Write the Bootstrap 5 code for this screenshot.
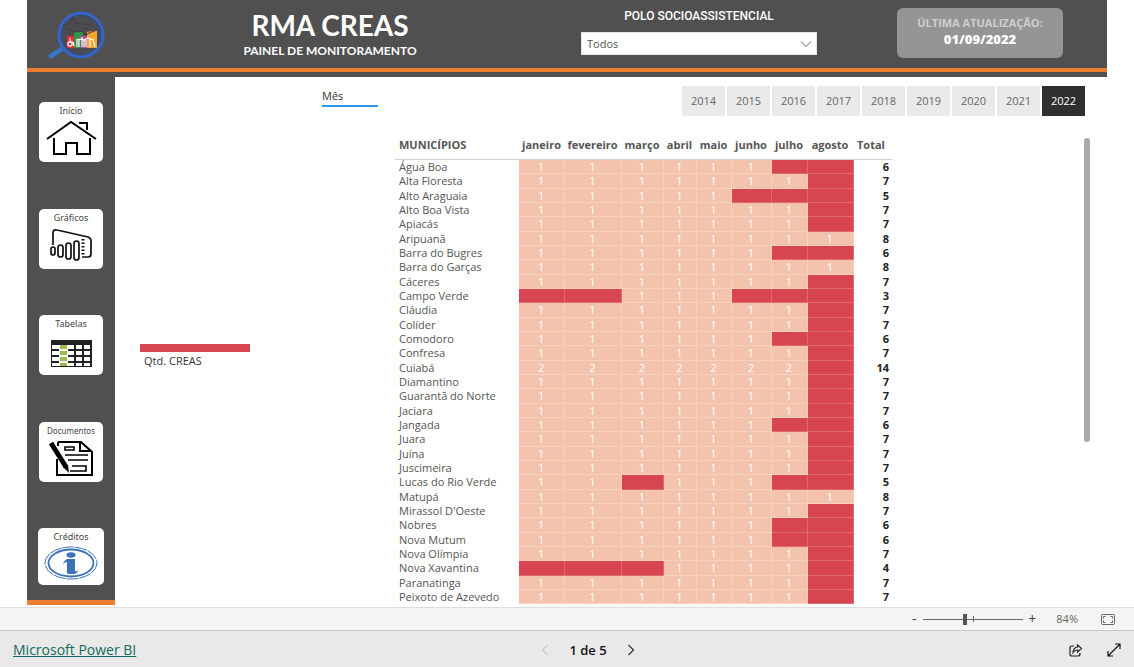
<!DOCTYPE html>
<html lang="pt-BR">
<head>
<meta charset="utf-8">
<meta name="viewport" content="width=device-width, initial-scale=1">
<title>RMA CREAS - Painel de Monitoramento</title>
<link href="https://cdn.jsdelivr.net/npm/bootstrap@5.3.0/dist/css/bootstrap.min.css" rel="stylesheet">
<script src="https://cdn.jsdelivr.net/npm/bootstrap@5.3.0/dist/js/bootstrap.bundle.min.js" defer></script>
<style>
  :root { --slate:#505050; --orange:#ed7d31; --peach:#f4c3ae; --red:#d64550; }
  body { font-family:"Open Sans","Noto Sans",sans-serif; font-size:11px; line-height:14px; color:#555; background:#fff; }
  .report { margin:0 27px 2px; }
  .top-band { background:var(--slate); display:grid; grid-template-columns:88px 430fr 308fr 254fr; height:68px; }
  .stripe { height:9px; background:var(--slate); border-top:4px solid var(--orange); }
  .brand-title { font:700 28px/36px Lato,sans-serif; padding-top:7px; }
  .brand-sub { font:700 12px/16px Lato,sans-serif; }
  .filter-label { font:500 12px/16px Roboto,sans-serif; }
  .filter-select { width:236px; height:23px; padding:0 5px; font-size:11px; line-height:14px; color:#555; border:1px solid #e6e6e6; border-radius:0;
    background-position:right 4px center; background-size:12px 12px;
    background-image:url("data:image/svg+xml,%3Csvg xmlns='http://www.w3.org/2000/svg' viewBox='0 0 12 12'%3E%3Cpath d='M1 3.5l5 5 5-5' fill='none' stroke='%23666'/%3E%3C/svg%3E"); }
  .update-box { width:166px; height:50px; background:#959595; border-radius:6px; color:#cfcfcf; font-weight:700; }
  .update-box strong { font-size:13px; line-height:18px; color:#fff; }
  .side { width:88px; flex:none; background:var(--slate); border-bottom:5px solid var(--orange); padding:25px 12px 15px; }
  .side a { width:64px; height:60px; background:#fff; border-radius:5px; color:#444; text-decoration:none; font:9px/14px "Noto Sans",sans-serif; padding-top:2px; }
  .side .label-condensed { font-size:8px; }
  .side .card-last { width:66px; height:57px; }
  .side svg { width:54px; height:40px; }
  .tab-month { width:56px; color:#333; border-bottom:2px solid #2f96e6; margin-left:207px; }
  .main-top { padding:9px 22px 0 0; }
  .year-group { gap:2px; }
  .year { width:43px; height:30px; padding:0; border:0; border-radius:0; background:#eaeaea; color:#666; font-size:11px; }
  .year:hover { background:#ddd; }
  .year.active, .year.active:hover { background:#2f2f2f; color:#fff; }
  .legend { width:110px; margin:228px 145px 0 25px; color:#333; }
  .legend-bar { height:8px; background:var(--red); margin-bottom:2px; }
  .matrix { table-layout:fixed; width:497px; margin-top:15px; }
  .matrix th { font-weight:700; height:28px; padding:0; text-align:center; border-bottom:1px solid #d0d0d0; }
  .matrix tbody tr { height:14px; }
  .matrix tbody tr:nth-child(3n+2) { height:15px; }
  .matrix td { padding:0; line-height:13px; text-align:center; white-space:nowrap; }
  .matrix .town { text-align:left; padding-left:4px; font-weight:400; }
  .matrix th.town { font-weight:700; }
  .matrix .val { background:var(--peach); color:#fff; border-right:1px solid #f7d0bf; border-bottom:1px solid #f7d0bf; }
  .matrix .none { background:var(--red); border-color:#df6a73; }
  .matrix .sum { text-align:right; padding-right:3px; color:#222; font-weight:700; }
  .matrix .sum-head { text-align:left; padding-left:4px; }
  .scroll-thumb { width:6px; height:304px; border-radius:3px; background:#aaa; margin:22px 17px 0 auto; }
  .zoom-bar { height:23px; background:#f4f4f4; border-top:1px solid #ddd; padding-right:19px; color:#666; }
  .zoom-bar button, .pager button { padding:0; border:0; background:none; color:inherit; }
  .zoom-step { width:10px; font-size:14px; line-height:16px; color:#444 !important; }
  .zoom-range { appearance:none; width:100px; height:12px; margin:0 4px; background:linear-gradient(#666,#666) 50px 3px/1px 6px no-repeat, linear-gradient(#666,#666) 0 6px/100px 1px no-repeat; }
  .zoom-range::-webkit-slider-thumb { appearance:none; width:4px; height:11px; background:#555; }
  .zoom-value { margin:0 23px 0 19px; }
  .pager { min-height:37px; background:#e9e9e9; border-top:1px solid #c8c8c8; display:grid; grid-template-columns:1fr auto 1fr; padding:2px 13px 0; }
  .pager a { font-size:14px; line-height:18px; color:#0f6b61; }
  .page-nav { margin-left:42px; }
  .pager .page-no { font-size:13px; line-height:18px; font-weight:600; color:#111; }
</style>
</head>
<body class="d-flex flex-column min-vh-100">
<div class="report flex-grow-1 d-flex flex-column">
  <header>
    <div class="top-band text-white">
      <svg class="ms-3 mt-2" width="66" height="54" viewBox="0 0 66 54" role="img" aria-label="Logo RMA">
        <path d="M8 48L22 39" stroke="#3a72c8" stroke-width="5" stroke-linecap="round"/>
        <circle cx="38" cy="27" r="22" fill="#4c4c50" stroke="#3467c5" stroke-width="3"/>
        <circle cx="38" cy="27" r="19.500" fill="none" stroke="#294c9b"/>
        <path d="M20 17l7-1 3-7 2 6 9 1 10 2M23 19l6 4M40 20l8 2" stroke="#3b3b3d" stroke-width=".7" fill="none"/>
        <path d="M24 28h8v12h-8z" fill="#e42e36"/><path d="M31 25l2-2 7 1v16h-9z" fill="#329345"/>
        <path d="M38 28h8v12h-8z" fill="#b14ca1"/><path d="M44 24l10-2v18H44z" fill="#f6a42b"/>
        <path d="M31 24l8-1 4 4 3-2 8-3" fill="none" stroke="#3b3b3d"/>
        <g stroke="#fff" stroke-width="1.200" fill="none"><circle cx="27" cy="36" r="2.200"/><path d="M27 30v4h3l1 4M34 32v7M36 31v8M39 29v10M41 31v8M43 32v7M47 30v9M50 31l2 8M33 32l4-1 4 1 4-2 5 2"/></g>
      </svg>
      <div class="text-center">
        <h1 class="brand-title m-0">RMA CREAS</h1>
        <p class="brand-sub m-0">PAINEL DE MONITORAMENTO</p>
      </div>
      <div class="d-flex flex-column align-items-center pt-2">
        <label class="filter-label mb-2" for="polo">POLO SOCIOASSISTENCIAL</label>
        <select class="form-select filter-select" id="polo"><option>Todos</option></select>
      </div>
      <div class="pt-2">
        <div class="update-box mx-auto text-center pt-2">ÚLTIMA ATUALIZAÇÃO:<br><strong>01/09/2022</strong></div>
      </div>
    </div>
    <div class="stripe"></div>
  </header>
  <div class="d-flex flex-grow-1">
    <nav class="side d-flex flex-column align-items-center justify-content-between" aria-label="Páginas">
      <a class="d-flex flex-column align-items-center" href="#inicio">Início
        <svg viewBox="0 0 54 40" fill="none" stroke="#000" stroke-width="2"><path d="M3 21L27 4l25 17M10 20v16h12V25h11v11h13V20M35 5h8v7"/></svg></a>
      <a class="d-flex flex-column align-items-center" href="#graficos">Gráficos
        <svg viewBox="0 0 54 40" fill="none" stroke="#111" stroke-width="1.700"><path d="M9 20V8q0-4 4-3l31 7q3 1 3 4v13q0 3-3 3h-6"/><rect x="7" y="22" width="4" height="8" rx="2"/><rect x="14" y="20" width="5" height="12" rx="2.500"/><rect x="22" y="18" width="5" height="16" rx="2.500"/><rect x="30" y="16" width="5" height="19" rx="2.500"/><path d="M39 14v17" stroke-width="3" stroke-dasharray="1.500 2"/></svg></a>
      <a class="d-flex flex-column align-items-center" href="#tabelas">Tabelas
        <svg viewBox="0 0 54 40"><path d="M7 9h41v27H7z" fill="#222"/><path d="M8 14h7v4H8zm0 6h7v4H8zm0 6h7v4H8zm0 6h7v3H8zM24 14h6v4h-6zm0 6h6v4h-6zm0 6h6v4h-6zm0 6h6v3h-6zM32 14h6v4h-6zm0 6h6v4h-6zm0 6h6v4h-6zm0 6h6v3h-6zM40 14h6v4h-6zm0 6h6v4h-6zm0 6h6v4h-6zm0 6h6v3h-6z" fill="#fff"/><path d="M15 14h9v21h-9z" fill="#fff"/><path d="M16 14h7v4h-7zm0 6h7v4h-7zm0 6h7v4h-7zm0 6h7v3h-7z" fill="#9cbb50"/></svg></a>
      <a class="d-flex flex-column align-items-center label-condensed" href="#documentos">Documentos
        <svg viewBox="0 0 54 40" fill="none" stroke="#000" stroke-width="2"><path d="M14 4h23l11 10v23H13V21M14 4v4M36 4v9h12"/><path d="M21 9h9v3h-9zM21 17h23M24 22h20M28 28h14v5H26" stroke-width="1.600"/><path d="M7 5l15 24" stroke-width="5"/><path d="M19 29l6 6-1-8z" fill="#000" stroke="none"/></svg></a>
      <a class="d-flex flex-column align-items-center card-last" href="#creditos">Créditos
        <svg viewBox="0 0 54 40" fill="none" stroke="#3b72b8"><ellipse cx="27" cy="19" rx="26" ry="16" stroke-dasharray="12 1"/><ellipse cx="27" cy="19" rx="22.500" ry="13.500" stroke-width="1.800"/><ellipse cx="27" cy="11" rx="4.500" ry="2.700" fill="#3b72b8" stroke="none"/><path d="M19 20q2-5 5-5h7v12q2 1 3-1 0 4-5 4h-4q-3 0-2-4v-8q-2 0-4 2z" fill="#3b72b8" stroke="none"/></svg></a>
    </nav>
    <main class="flex-grow-1">
      <div class="main-top d-flex justify-content-between">
        <div><div class="tab-month pt-1 mb-auto lh-1 pb-1">Mês</div></div>
        <div class="year-group d-flex" id="years" role="group" aria-label="Ano"></div>
      </div>
      <div class="d-flex">
        <div class="legend"><div class="legend-bar"></div><div class="ps-1">Qtd. CREAS</div></div>
        <table class="matrix">
          <colgroup><col style="width:124px"><col style="width:45px"><col style="width:57px"><col style="width:42px"><col style="width:33px"><col style="width:35px"><col style="width:40px"><col style="width:36px"><col style="width:46px"><col style="width:39px"></colgroup>
          <thead><tr><th class="town">MUNICÍPIOS</th><th>janeiro</th><th>fevereiro</th><th>março</th><th>abril</th><th>maio</th><th>junho</th><th>julho</th><th>agosto</th><th class="sum-head">Total</th></tr></thead>
          <tbody id="rows"></tbody>
        </table>
        <div class="scroll-thumb"></div>
      </div>
    </main>
  </div>
</div>
<div class="zoom-bar d-flex align-items-center justify-content-end">
  <button class="zoom-step" aria-label="Reduzir">-</button>
  <input class="zoom-range" type="range" min="0" max="100" value="41" aria-label="Zoom">
  <button class="zoom-step" aria-label="Ampliar">+</button>
  <span class="zoom-value">84%</span>
  <button class="d-flex" aria-label="Ajustar à página"><svg width="14" height="11" viewBox="0 0 14 11" fill="none" stroke="#666"><rect x=".5" y=".5" width="13" height="10" rx="1"/><path d="M2.500 4.500v-2h2M9.500 2.500h2v2M2.500 6.500v2h2M9.500 8.500h2v-2"/></svg></button>
</div>
<footer class="pager align-items-center">
  <div><a href="#powerbi">Microsoft Power BI</a></div>
  <div class="page-nav d-flex align-items-center">
    <button class="d-flex" aria-label="Página anterior"><svg width="8" height="12" viewBox="0 0 8 12" fill="none" stroke="#b8b8b8"><path d="M6.500 1l-5 5 5 5"/></svg></button>
    <span class="page-no mx-3 px-1">1 de 5</span>
    <button class="d-flex" aria-label="Próxima página"><svg width="8" height="12" viewBox="0 0 8 12" fill="none" stroke="#333" stroke-width="1.200"><path d="M1.500 1l5 5-5 5"/></svg></button>
  </div>
  <div class="d-flex justify-content-end align-items-center">
    <button class="d-flex me-4" aria-label="Compartilhar"><svg width="14" height="13" viewBox="0 0 14 13" fill="none" stroke="#222" stroke-width="1.200"><path d="M5 2H3Q1 2 1 4v6q0 2 2 2h6q2 0 2-2V9M8.500 1l4 3.500-4 3.500V6Q6 6 4 8.500 4.500 3.500 8.500 3z"/></svg></button>
    <button class="d-flex" aria-label="Tela inteira"><svg width="14" height="14" viewBox="0 0 14 14" fill="none" stroke="#111" stroke-width="1.200"><path d="M1 13L13 1M8 1h5v5M1 8v5h5"/></svg></button>
  </div>
</footer>
<script>
  // One character per month, janeiro to agosto; "-" marks a month without data.
  const towns = [
    ["Água Boa","111111--"],["Alta Floresta","1111111-"],["Alto Araguaia","11111---"],["Alto Boa Vista","1111111-"],
    ["Apiacás","1111111-"],["Aripuanã","11111111"],["Barra do Bugres","111111--"],["Barra do Garças","11111111"],
    ["Cáceres","1111111-"],["Campo Verde","--111---"],["Cláudia","1111111-"],["Colíder","1111111-"],
    ["Comodoro","111111--"],["Confresa","1111111-"],["Cuiabá","2222222-"],["Diamantino","1111111-"],
    ["Guarantã do Norte","1111111-"],["Jaciara","1111111-"],["Jangada","111111--"],["Juara","1111111-"],
    ["Juína","1111111-"],["Juscimeira","1111111-"],["Lucas do Rio Verde","11-111--"],["Matupá","11111111"],
    ["Mirassol D'Oeste","1111111-"],["Nobres","111111--"],["Nova Mutum","111111--"],["Nova Olímpia","1111111-"],
    ["Nova Xavantina","---1111-"],["Paranatinga","1111111-"],["Peixoto de Azevedo","1111111-"]
  ];
  document.getElementById("rows").innerHTML = towns.map(([name, months]) => {
    const cells = [...months].map(m => m === "-" ? '<td class="val none"></td>' : `<td class="val">${m}</td>`).join("");
    const total = [...months].reduce((s, m) => s + (+m || 0), 0);
    return `<tr><td class="town">${name}</td>${cells}<td class="sum">${total}</td></tr>`;
  }).join("");
  document.getElementById("years").innerHTML = [2014,2015,2016,2017,2018,2019,2020,2021,2022]
    .map(y => `<button class="btn year${y === 2022 ? " active" : ""}">${y}</button>`).join("");
</script>
</body>
</html>
